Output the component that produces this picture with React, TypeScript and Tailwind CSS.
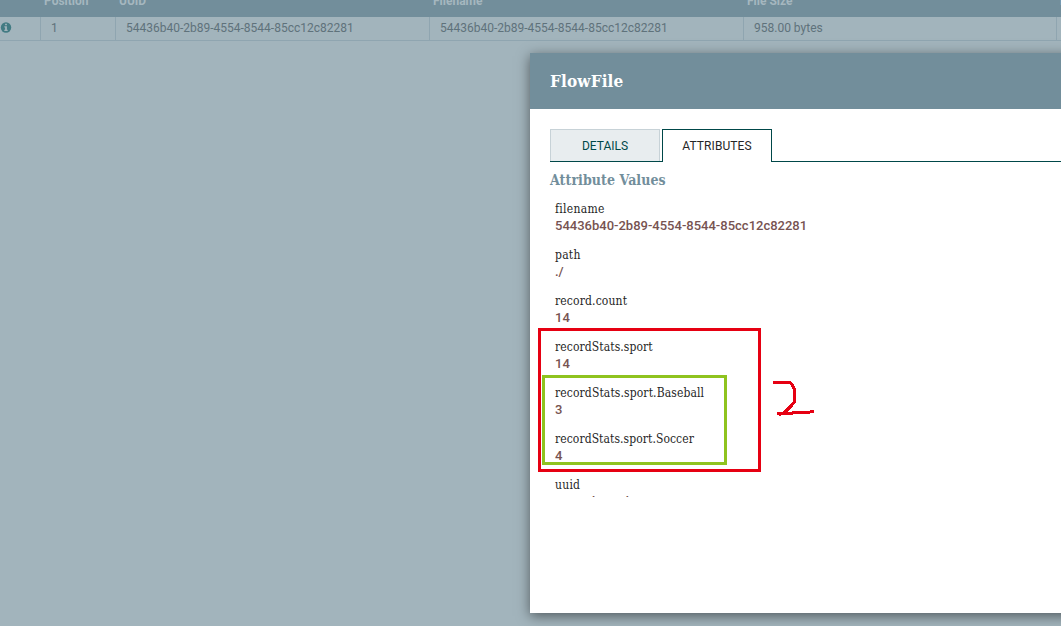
import React from 'react';

const slab = "font-['Roboto_Slab','DejaVu_Serif_Condensed','DejaVu_Serif',serif]";

const id = '54436b40-2b89-4554-8544-85cc12c82281';

const columns = [
  { title: '', value: '', width: 'w-[41px]' },
  { title: 'Position', value: '1', width: 'w-[75px]' },
  { title: 'UUID', value: id, width: 'w-[314px]' },
  { title: 'Filename', value: id, width: 'w-[314px]' },
  { title: 'File Size', value: '958.00 bytes', width: 'w-[313px]' },
  { title: 'Node', value: '', width: 'w-[100px]' },
];

const attributes = [
  { name: 'filename', value: id, spacing: 'tracking-[0.3px]' },
  { name: 'path', value: './', spacing: 'tracking-[0.25px]' },
  { name: 'record.count', value: '14', spacing: 'tracking-[0.15px]' },
  { name: 'recordStats.sport', value: '14', spacing: 'tracking-[0.1px]' },
  { name: 'recordStats.sport.Baseball', value: '3', spacing: 'tracking-[0.12px]' },
  { name: 'recordStats.sport.Soccer', value: '4', spacing: 'tracking-[0.08px]' },
  { name: 'uuid', value: id, spacing: 'tracking-[0.25px]' },
];

function InfoIcon() {
  return (
    <svg width="12" height="11" viewBox="0 0 12 11" className="mt-[5px] block">
      <circle cx="6" cy="5.5" r="5.2" fill="#427b83" />
      <path d="M5.1 1.8h1.8v1.5H5.1zM4.4 4.3h2.5v3.5h.8v1.1H4.3V7.8h.8V5.4h-.7z" fill="#a2b4bc" />
    </svg>
  );
}

function ListingTable() {
  return (
    <div className="w-[1200px]">
      <div className="flex h-[17px] bg-[#728e9b]">
        {columns.map((c, i) => (
          <div key={i} className={`${c.width} shrink-0 pl-[3px] text-[12px] font-bold leading-[16px] text-[#a5b7bf]`}>
            <div className="-mt-[7px]">{c.title}</div>
          </div>
        ))}
      </div>
      <div className="flex h-[24px] border-b border-[#8fa5b0]">
        {columns.map((c, i) => (
          <div
            key={i}
            className={`${c.width} shrink-0 border-r border-[#8fa5b0] text-[12px] leading-[22px] text-[#5f727b] ${i ? 'pl-[10px]' : ''}`}
          >
            {i === 0 ? <InfoIcon /> : c.value}
          </div>
        ))}
      </div>
    </div>
  );
}

function Tabs() {
  return (
    <div className="flex h-[33px] text-[12px] leading-[32px]">
      <div className="w-[110px] border-b border-[#004849]">
        <div className="h-[32px] border border-b-0 border-[#c7d2d7] bg-[#e8edef] text-center text-[#004849]">DETAILS</div>
      </div>
      <div className="w-[2px] border-b border-[#004849]" />
      <div className="w-[110px] border border-b-0 border-[#004849] text-center tracking-[0.08px] text-[#262626]">ATTRIBUTES</div>
      <div className="grow border-b border-[#004849]" />
    </div>
  );
}

function FlowFileDialog() {
  return (
    <div className="absolute left-[530px] top-[53px] h-[560px] w-[600px] bg-white shadow-[0_3px_12px_rgba(0,0,0,0.5)]">
      <div className={`${slab} h-[56px] bg-[#728e9b] pl-[20px] text-[17px] font-bold leading-[57px] tracking-[0.15px] text-white`}>
        FlowFile
      </div>
      <div className="pl-[20px] pt-[20px]">
        <Tabs />
        <div className={`${slab} mt-[9px] h-[18px] text-[14px] font-bold leading-[18px] tracking-[0.08px] text-[#728e9b]`}>
          Attribute Values
        </div>
        <div className="mt-[11px] h-[297px] overflow-hidden pl-[5px]">
          {attributes.map((a) => (
            <div key={a.name} className="h-[46px]">
              <div className={`${slab} ${a.spacing} h-[17px] text-[12px] leading-[19px] text-[#262626]`}>{a.name}</div>
              <div className="h-[17px] text-[13px] font-medium leading-[17px] text-[#775351]">{a.value}</div>
            </div>
          ))}
        </div>
      </div>
    </div>
  );
}

export default function App() {
  return (
    <div className="relative h-[626px] w-[1061px] overflow-hidden bg-[#a2b4bc] font-['Roboto',sans-serif]">
      <ListingTable />
      <FlowFileDialog />
      <div className="absolute left-[538px] top-[328px] h-[144px] w-[223px] border-[3px] border-[#e60012]" />
      <div className="absolute left-[542px] top-[375px] h-[90px] w-[185px] border-[3px] border-[#8fc31f]" />
      <svg className="absolute left-[765px] top-[370px]" width="60" height="55" viewBox="0 0 60 55" shapeRendering="crispEdges">
        <path
          d="M8 12.5H25L28 16L29.5 20V32L26 36L20 42L14 45M12 43.5H27L28 42.5H44L46 41.5H49"
          fill="none"
          stroke="#e60012"
          strokeWidth="3"
        />
      </svg>
    </div>
  );
}
